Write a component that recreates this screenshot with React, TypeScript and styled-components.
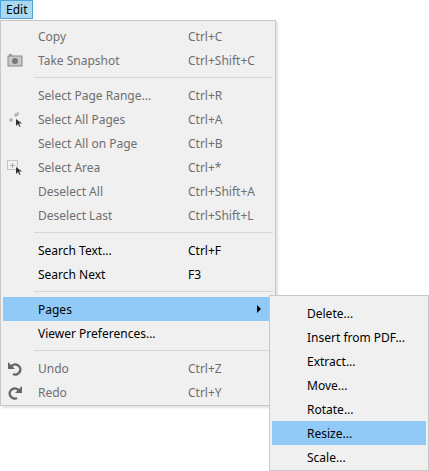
import styled, { createGlobalStyle } from 'styled-components';

const Global = createGlobalStyle`
	body { margin: 0; background: #fff; font-family: "Noto Sans", "DejaVu Sans", sans-serif; font-size: 12px; }
`;

const Bar = styled.div`
	height: 20px;
	display: flex;
`;

const BarButton = styled.div`
	padding: 0 5px;
	height: 19px;
	line-height: 18px;
	background: #a9d8f2;
	border: 1px solid #4fa3d8;
	box-sizing: border-box;
	color: #000;
`;

const Menu = styled.div<{ $left: number; $top: number; $width: number }>`
	position: absolute;
	left: ${({ $left }) => $left}px;
	top: ${({ $top }) => $top}px;
	width: ${({ $width }) => $width}px;
	background: #f0f0f0;
	border: 1px solid #c8c8c8;
	box-sizing: border-box;
	padding: 3px 2px 1px;
	box-shadow: 2px 2px 2px rgba(0, 0, 0, 0.12);
`;

const Item = styled.div<{ $disabled?: boolean; $active?: boolean; $textLeft: number }>`
	position: relative;
	height: 24px;
	display: flex;
	align-items: center;
	padding-left: ${({ $textLeft }) => $textLeft}px;
	color: ${({ $disabled }) => ($disabled ? '#6f6f6f' : '#000')};
	background: ${({ $active }) => ($active ? '#91c9f7' : 'transparent')};
	white-space: nowrap;
`;

const Label = styled.span`
	width: 150px;
`;

const IconSlot = styled.span`
	position: absolute;
	left: 4px;
	top: 4px;
	width: 16px;
	height: 16px;
	display: flex;
	align-items: center;
	justify-content: center;
`;

const Arrow = styled.span`
	position: absolute;
	right: 12px;
	top: 8px;
	border-left: 4px solid #000;
	border-top: 4px solid transparent;
	border-bottom: 4px solid transparent;
`;

const Sep = styled.div`
	height: 11px;
	display: flex;
	align-items: center;
	padding-left: 31px;
	&::after {
		content: '';
		flex: 1;
		height: 1px;
		background: #d7d7d7;
	}
`;

const Camera = () => (
	<svg width="16" height="14" viewBox="0 0 16 14">
		<rect x="1" y="3" width="14" height="10" fill="#c8c8c8" stroke="#888" />
		<circle cx="8" cy="8" r="3" fill="#777" />
		<rect x="2" y="1" width="3" height="2" fill="#999" />
	</svg>
);

const SelectAll = () => (
	<svg width="16" height="16" viewBox="0 0 16 16">
		<path d="M2 9h4M4 7v4M7 4h4M9 2v4M11 1v3" stroke="#999" strokeWidth="1" fill="none" />
		<path d="M9 8l0 7 2-2 1.5 3 1-.5-1.5-3h3z" fill="#333" />
	</svg>
);

const SelectArea = () => (
	<svg width="16" height="16" viewBox="0 0 16 16">
		<rect x="0.5" y="1.5" width="10" height="9" fill="none" stroke="#999" strokeDasharray="1 1" />
		<path d="M5.5 4v5M3 6.5h5" stroke="#aaa" />
		<path d="M9 8l0 7 2-2 1.5 3 1-.5-1.5-3h3z" fill="#333" />
	</svg>
);

const UndoIcon = ({ flip }: { flip?: boolean }) => (
	<svg width="16" height="16" viewBox="0 0 16 16" style={flip ? { transform: 'scaleX(-1)' } : undefined}>
		<path d="M4 7a5 5 0 1 1 2 7" stroke="#666" strokeWidth="2.4" fill="none" />
		<path d="M1 2v7h7z" fill="#666" />
	</svg>
);

type Row = { label?: string; key?: string; disabled?: boolean; icon?: JSX.Element; active?: boolean; sub?: boolean };

const main: Row[] = [
	{ label: 'Copy', key: 'Ctrl+C', disabled: true },
	{ label: 'Take Snapshot', key: 'Ctrl+Shift+C', disabled: true, icon: <Camera /> },
	{},
	{ label: 'Select Page Range...', key: 'Ctrl+R', disabled: true },
	{ label: 'Select All Pages', key: 'Ctrl+A', disabled: true, icon: <SelectAll /> },
	{ label: 'Select All on Page', key: 'Ctrl+B', disabled: true },
	{ label: 'Select Area', key: 'Ctrl+*', disabled: true, icon: <SelectArea /> },
	{ label: 'Deselect All', key: 'Ctrl+Shift+A', disabled: true },
	{ label: 'Deselect Last', key: 'Ctrl+Shift+L', disabled: true },
	{},
	{ label: 'Search Text...', key: 'Ctrl+F' },
	{ label: 'Search Next', key: 'F3' },
	{},
	{ label: 'Pages', active: true, sub: true },
	{ label: 'Viewer Preferences...' },
	{},
	{ label: 'Undo', key: 'Ctrl+Z', disabled: true, icon: <UndoIcon /> },
	{ label: 'Redo', key: 'Ctrl+Y', disabled: true, icon: <UndoIcon flip /> },
];

const pages = ['Delete...', 'Insert from PDF...', 'Extract...', 'Move...', 'Rotate...', 'Resize...', 'Scale...'];

export default function App() {
	return (
		<>
			<Global />
			<Bar>
				<BarButton>Edit</BarButton>
			</Bar>
			<Menu $left={0} $top={20} $width={276}>
				{main.map((r, i) =>
					r.label === undefined ? (
						<Sep key={i} />
					) : (
						<Item key={i} $textLeft={35} $disabled={r.disabled} $active={r.active}>
							{r.icon && <IconSlot>{r.icon}</IconSlot>}
							<Label>{r.label}</Label>
							{r.key && <span>{r.key}</span>}
							{r.sub && <Arrow />}
						</Item>
					),
				)}
			</Menu>
			<Menu $left={269} $top={295} $width={160}>
				<div style={{ height: 2 }} />
				{pages.map((p) => (
					<Item key={p} $textLeft={35} $active={p === 'Resize...'}>
						<Label>{p}</Label>
					</Item>
				))}
			</Menu>
		</>
	);
}
